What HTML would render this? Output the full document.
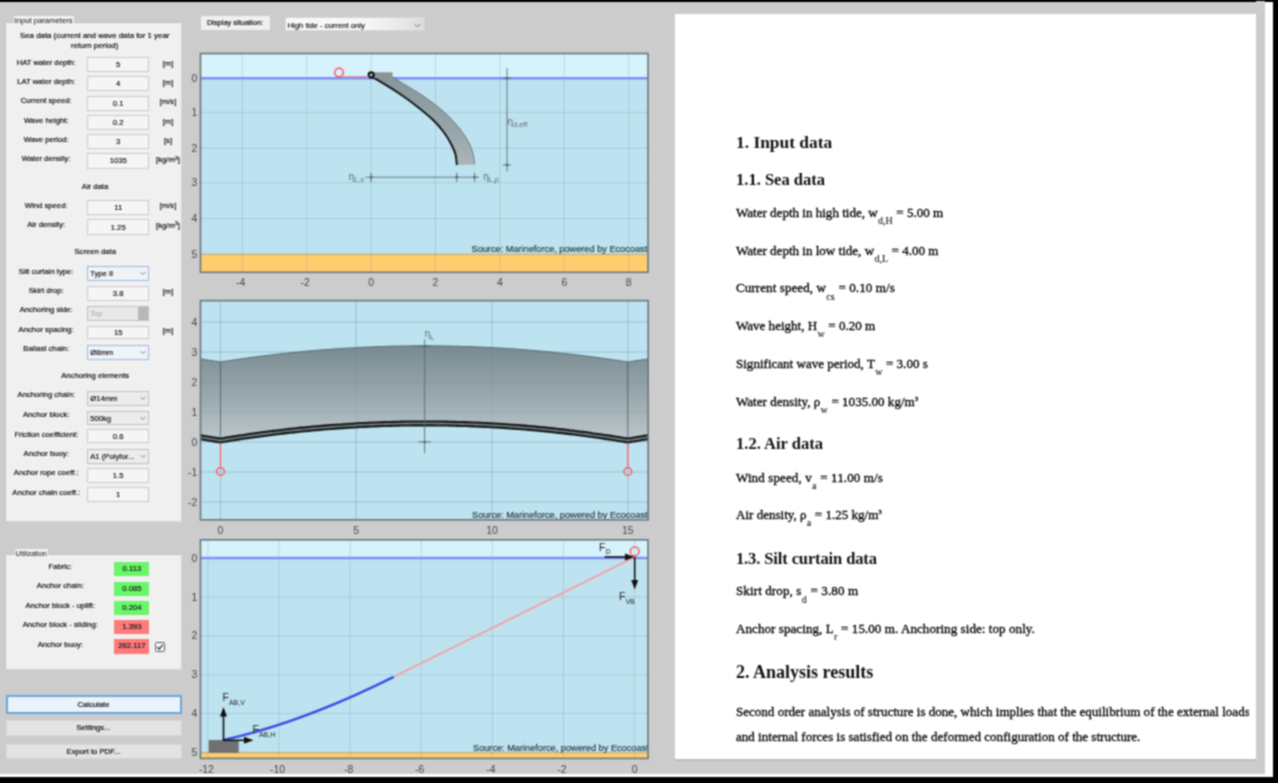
<!DOCTYPE html><html><head><meta charset="utf-8"><title>Silt curtain</title><style>
*{box-sizing:border-box;margin:0;padding:0}
html,body{width:1278px;height:783px;overflow:hidden}
body{background:#000;font-family:"Liberation Sans",sans-serif;font-size:7.7px;color:#222;position:relative}
#root{position:absolute;left:-12px;top:-12px;width:1302px;height:807px;background:#000;overflow:hidden;filter:url(#soft)}
#stage{position:absolute;left:12px;top:12px;width:1278px;height:783px}
#app{position:absolute;left:0;top:2px;width:1265px;height:772px;background:#cccccc}
.wstrip{position:absolute;background:#fff}
.abs{position:absolute}
.panel{position:absolute;background:#f0f0f0;box-shadow:-1px -1px 0 0 #c1c1c1, 1px 1px 0 0 #d6d6d6}
.ptitle{position:absolute;background:#f0f0f0;padding:0 1px;line-height:9px;height:9px;white-space:nowrap;color:#111}
.lbl{position:absolute;text-align:center;white-space:nowrap;line-height:10px;height:10px;color:#000;-webkit-text-stroke:0.15px #000}
.inp{position:absolute;background:#f5f5f5;border:1px solid #cacaca;text-align:center;line-height:13px;color:#000;-webkit-text-stroke:0.12px #000;white-space:nowrap;overflow:hidden}
.sel{position:absolute;background:#ececec;border:1px solid #c0c0c0;text-align:left;padding-left:2px;line-height:13px;color:#000;-webkit-text-stroke:0.12px #000;white-space:nowrap;overflow:hidden}
.sel.foc{border-color:#9db9dc;background:#eef3f8}
.sel svg{position:absolute;right:2px;top:4px}
.util{position:absolute;text-align:center;line-height:14px;color:#111;-webkit-text-stroke:0.15px #111}
.btn{position:absolute;background:#e3e3e3;border:1px solid #d6d6d6;text-align:center;color:#000;white-space:nowrap;-webkit-text-stroke:0.15px #000}
#doc{position:absolute;left:674.6px;top:14px;width:581.4px;height:746.5px;background:#fff;font-family:"Liberation Serif",serif;color:#111;border-bottom:2px solid #bdbdbd;overflow:hidden}
#docclip{position:absolute;left:0;top:0;width:574.3px;height:100%;overflow:hidden}
#doc .h1{position:absolute;left:61.4px;font-weight:bold;font-size:17.7px;line-height:20px;white-space:nowrap}
#doc .h2{position:absolute;left:61.4px;font-weight:bold;font-size:16.55px;line-height:20px;white-space:nowrap}
#doc .p{position:absolute;left:61.4px;font-size:13.05px;line-height:16px;white-space:nowrap;color:#000;-webkit-text-stroke:0.3px #000}
#doc sub{font-size:10px;vertical-align:baseline;position:relative;top:7.4px;margin:0 0.3px;-webkit-text-stroke:0.1px #111;color:#111}
#doc sup{font-size:7px;vertical-align:baseline;position:relative;top:-5px}
</style></head><body>
<svg width="0" height="0" style="position:absolute"><defs><filter id="soft" x="0" y="0" width="100%" height="100%" color-interpolation-filters="sRGB"><feConvolveMatrix order="3" kernelMatrix="1 2.0 1 2.0 4.0 2.0 1 2.0 1" edgeMode="duplicate" preserveAlpha="true"/></filter></defs></svg>
<div id="root"><div class="abs" style="left:0;top:14px;width:20px;height:772px;background:#ccc"></div><div class="abs" style="left:0;top:786px;width:20px;height:3px;background:#fff"></div><div id="stage">
<div class="wstrip" style="left:1264.5px;top:2px;width:8.5px;height:775px"></div>
<div class="wstrip" style="left:0;top:774px;width:1273px;height:3px"></div>
<div class="abs" style="left:1256px;top:1px;width:8.7px;height:2px;background:#ccc"></div>
<div id="app">
<div class="panel" style="left:5.9px;top:21px;width:174.8px;height:497.7px"></div>
<div class="ptitle" style="left:13.5px;top:13.5px;">Input parameters</div>
<div class="lbl" style="left:9.700000000000003px;top:28.700000000000003px;width:170px;font-size:7.86px">Sea data (current and wave data for 1 year</div>
<div class="lbl" style="left:9.700000000000003px;top:38.7px;width:170px;font-size:7.86px">return period)</div>
<div class="lbl" style="left:1.2000000000000028px;top:55.8px;width:90px;">HAT water depth:</div>
<div class="inp" style="left:87.2px;top:54.5px;width:61.999999999999986px;height:15.0px;line-height:14.0px">5</div>
<div class="lbl" style="left:153.0px;top:56.599999999999994px;width:30px;">[m]</div>
<div class="lbl" style="left:1.2000000000000028px;top:75.3px;width:90px;">LAT water depth:</div>
<div class="inp" style="left:87.2px;top:74px;width:61.999999999999986px;height:15.200000000000003px;line-height:14.200000000000003px">4</div>
<div class="lbl" style="left:153.0px;top:76.1px;width:30px;">[m]</div>
<div class="lbl" style="left:1.2000000000000028px;top:94.3px;width:90px;">Current speed:</div>
<div class="inp" style="left:87.2px;top:93.5px;width:61.999999999999986px;height:15.0px;line-height:14.0px">0.1</div>
<div class="lbl" style="left:153.0px;top:95.1px;width:30px;">[m/s]</div>
<div class="lbl" style="left:1.2000000000000028px;top:113.7px;width:90px;">Wave height:</div>
<div class="inp" style="left:87.2px;top:113px;width:61.999999999999986px;height:15px;line-height:14px">0.2</div>
<div class="lbl" style="left:153.0px;top:114.5px;width:30px;">[m]</div>
<div class="lbl" style="left:1.2000000000000028px;top:133px;width:90px;">Wave period:</div>
<div class="inp" style="left:87.2px;top:132.4px;width:61.999999999999986px;height:14.400000000000006px;line-height:13.400000000000006px">3</div>
<div class="lbl" style="left:153.0px;top:133.8px;width:30px;">[s]</div>
<div class="lbl" style="left:1.2000000000000028px;top:152.2px;width:90px;">Water density:</div>
<div class="inp" style="left:87.2px;top:151.3px;width:61.999999999999986px;height:15.699999999999989px;line-height:14.699999999999989px">1035</div>
<div class="lbl" style="left:153.0px;top:153.0px;width:30px;">[kg/m<span style="font-size:5.5px;position:relative;top:-2.5px">3</span>]</div>
<div class="lbl" style="left:50.0px;top:179.5px;width:90px;">Air data</div>
<div class="lbl" style="left:1.2000000000000028px;top:198.6px;width:90px;">Wind speed:</div>
<div class="inp" style="left:87.2px;top:197.8px;width:61.999999999999986px;height:14.899999999999977px;line-height:13.899999999999977px">11</div>
<div class="lbl" style="left:153.0px;top:199.4px;width:30px;">[m/s]</div>
<div class="lbl" style="left:1.2000000000000028px;top:218px;width:90px;">Air density:</div>
<div class="inp" style="left:87.2px;top:216.9px;width:61.999999999999986px;height:16.099999999999994px;line-height:15.099999999999994px">1.25</div>
<div class="lbl" style="left:153.0px;top:218.8px;width:30px;">[kg/m<span style="font-size:5.5px;position:relative;top:-2.5px">3</span>]</div>
<div class="lbl" style="left:50.2px;top:245px;width:90px;">Screen data</div>
<div class="lbl" style="left:1.2000000000000028px;top:264.6px;width:90px;">Silt curtain type:</div>
<div class="sel foc" style="left:87.2px;top:263.8px;width:61.999999999999986px;height:15.399999999999977px;line-height:14.399999999999977px">Type II<svg width="6" height="5" viewBox="0 0 6 5"><path d="M0.5 1 L3 3.5 L5.5 1" fill="none" stroke="#7d8790" stroke-width="1"/></svg></div>
<div class="lbl" style="left:1.2000000000000028px;top:283.7px;width:90px;">Skirt drop:</div>
<div class="inp" style="left:87.2px;top:283.7px;width:61.999999999999986px;height:15.0px;line-height:14.0px">3.8</div>
<div class="lbl" style="left:153.0px;top:284.5px;width:30px;">[m]</div>
<div class="lbl" style="left:1.2000000000000028px;top:303px;width:90px;">Anchoring side:</div>
<div class="sel" style="left:87.2px;top:303.7px;width:61.999999999999986px;height:14.900000000000034px;line-height:13.900000000000034px;color:#a6a6a6;-webkit-text-stroke:0;background:#e9e9e9">Top<div class="abs" style="right:0;top:0;width:10.5px;height:100%;background:#b8b8b8"></div></div>
<div class="lbl" style="left:1.2000000000000028px;top:322.7px;width:90px;">Anchor spacing:</div>
<div class="inp" style="left:87.2px;top:323.6px;width:61.999999999999986px;height:13.599999999999966px;line-height:12.599999999999966px">15</div>
<div class="lbl" style="left:153.0px;top:323.5px;width:30px;">[m]</div>
<div class="lbl" style="left:1.2000000000000028px;top:342.2px;width:90px;">Ballast chain:</div>
<div class="sel foc" style="left:87.2px;top:342.7px;width:61.999999999999986px;height:14.900000000000034px;line-height:13.900000000000034px">&Oslash;8mm<svg width="6" height="5" viewBox="0 0 6 5"><path d="M0.5 1 L3 3.5 L5.5 1" fill="none" stroke="#7d8790" stroke-width="1"/></svg></div>
<div class="lbl" style="left:50.2px;top:369px;width:90px;">Anchoring elements</div>
<div class="lbl" style="left:1.2000000000000028px;top:388.3px;width:90px;">Anchoring chain:</div>
<div class="sel" style="left:87.2px;top:388.5px;width:61.999999999999986px;height:15.399999999999977px;line-height:14.399999999999977px">&Oslash;14mm<svg width="6" height="5" viewBox="0 0 6 5"><path d="M0.5 1 L3 3.5 L5.5 1" fill="none" stroke="#7d8790" stroke-width="1"/></svg></div>
<div class="lbl" style="left:1.2000000000000028px;top:408px;width:90px;">Anchor block:</div>
<div class="sel" style="left:87.2px;top:408.6px;width:61.999999999999986px;height:14.399999999999977px;line-height:13.399999999999977px">500kg<svg width="6" height="5" viewBox="0 0 6 5"><path d="M0.5 1 L3 3.5 L5.5 1" fill="none" stroke="#7d8790" stroke-width="1"/></svg></div>
<div class="lbl" style="left:1.3999999999999986px;top:427.6px;width:90px;">Friction coefficient:</div>
<div class="inp" style="left:87.2px;top:426.8px;width:61.999999999999986px;height:14.599999999999966px;line-height:13.599999999999966px">0.6</div>
<div class="lbl" style="left:1.2000000000000028px;top:446.7px;width:90px;">Anchor buoy:</div>
<div class="sel" style="left:87.2px;top:446.5px;width:61.999999999999986px;height:15.5px;line-height:14.5px">A1 (Polyfor...<svg width="6" height="5" viewBox="0 0 6 5"><path d="M0.5 1 L3 3.5 L5.5 1" fill="none" stroke="#7d8790" stroke-width="1"/></svg></div>
<div class="lbl" style="left:1.2000000000000028px;top:466.3px;width:90px;">Anchor rope coeff.:</div>
<div class="inp" style="left:87.2px;top:466px;width:61.999999999999986px;height:14.5px;line-height:13.5px">1.5</div>
<div class="lbl" style="left:1.2000000000000028px;top:485.6px;width:90px;">Anchor chain coeff.:</div>
<div class="inp" style="left:87.2px;top:485.3px;width:61.999999999999986px;height:15.099999999999966px;line-height:14.099999999999966px">1</div>
<div class="panel" style="left:5.9px;top:552.8px;width:174.8px;height:114.2px"></div>
<div class="ptitle" style="left:14.5px;top:546.5px;font-size:7.2px">Utilization</div>
<div class="lbl" style="left:10.299999999999997px;top:559.6px;width:100px;">Fabric:</div>
<div class="util" style="left:114.4px;top:559.8px;width:35px;height:14.400000000000091px;line-height:14.400000000000091px;background:#69f769">0.113</div>
<div class="lbl" style="left:10.299999999999997px;top:579.3px;width:100px;">Anchor chain:</div>
<div class="util" style="left:114.4px;top:579.5px;width:35px;height:14.5px;line-height:14.5px;background:#69f769">0.085</div>
<div class="lbl" style="left:10.299999999999997px;top:598.9px;width:100px;">Anchor block - uplift:</div>
<div class="util" style="left:114.4px;top:599px;width:35px;height:14px;line-height:14px;background:#69f769">0.204</div>
<div class="lbl" style="left:10.299999999999997px;top:618px;width:100px;">Anchor block - sliding:</div>
<div class="util" style="left:114.4px;top:618.2px;width:35px;height:14.0px;line-height:14.0px;background:#ff7a7a">1.393</div>
<div class="lbl" style="left:10.299999999999997px;top:638px;width:100px;">Anchor buoy:</div>
<div class="util" style="left:114.4px;top:637.4px;width:35px;height:14.399999999999977px;line-height:14.399999999999977px;background:#ff7a7a">262.117</div>
<div class="abs" style="left:154.6px;top:640.3px;width:10px;height:10px;border:1px solid #5a5a5a;border-radius:1.5px;background:#f6f6f6"><svg width="8" height="8" viewBox="0 0 8 8" style="position:absolute;left:0;top:0"><path d="M1.3 4 L3.2 6.2 L6.8 1.6" fill="none" stroke="#333" stroke-width="1.2"/></svg></div>
<div class="btn" style="left:5.5px;top:692.7px;width:176px;height:19.3px;line-height:15.5px;background:#e8f3fc;border:2px solid #6ba5dc">Calculate</div>
<div class="btn" style="left:5.5px;top:717.5px;width:176px;height:16px;line-height:14px">Settings...</div>
<div class="btn" style="left:5.5px;top:741.5px;width:176px;height:15px;line-height:13px">Export to PDF...</div>
<div class="abs" style="left:200.5px;top:14.2px;width:69px;height:14.3px;background:#f0f0f0;text-align:center;line-height:14px;color:#222;white-space:nowrap;font-size:7.45px;-webkit-text-stroke:0.15px #000;color:#000">Display situation:</div>
<div class="sel" style="left:284.5px;top:14.8px;width:140.5px;height:14.4px;line-height:15.5px;background:linear-gradient(90deg,#f8f8f8 0%,#f6f6f6 60%,#dddddd 100%);border-color:#d6d6d6">High tide - current only<svg width="7" height="5" viewBox="0 0 7 5" style="right:3px;top:5px"><path d="M0.5 0.8 L3.5 3.8 L6.5 0.8" fill="none" stroke="#777" stroke-width="1"/></svg></div>
<svg class="abs" style="left:0;top:0" width="1265" height="772" viewBox="0 2 1265 772" font-family="Liberation Sans, sans-serif">
<defs><linearGradient id="gcur2" x1="0" y1="0" x2="0" y2="1"><stop offset="0" stop-color="#798b92"/><stop offset="0.5" stop-color="#97a6ac"/><stop offset="1" stop-color="#bcc7ca"/></linearGradient><linearGradient id="gcur1" x1="0" y1="0" x2="0" y2="1"><stop offset="0" stop-color="#87969b"/><stop offset="0.6" stop-color="#97a5aa"/><stop offset="1" stop-color="#a9b5b9"/></linearGradient><clipPath id="c1"><rect x="200.5" y="53.5" width="447.5" height="218.8"/></clipPath><clipPath id="c2"><rect x="200.5" y="300.6" width="447.7" height="219.2"/></clipPath><clipPath id="c3"><rect x="200.5" y="539.8" width="447.5" height="218.6"/></clipPath></defs>
<rect x="200.5" y="53.5" width="447.5" height="24.700000000000003" fill="#d6f2fc"/>
<rect x="200.5" y="78.2" width="447.5" height="175.89999999999998" fill="#bee3f0"/>
<rect x="200.5" y="254.1" width="447.5" height="18.200000000000017" fill="#ffcd6e"/>
<line x1="200.5" x2="648.0" y1="254.4" y2="254.4" stroke="#dcae6a" stroke-width="1"/>
<line x1="242.3" x2="242.3" y1="53.5" y2="272.3" stroke="#5f8496" stroke-opacity="0.24" stroke-width="1"/>
<line x1="306.7" x2="306.7" y1="53.5" y2="272.3" stroke="#5f8496" stroke-opacity="0.24" stroke-width="1"/>
<line x1="371.1" x2="371.1" y1="53.5" y2="272.3" stroke="#5f8496" stroke-opacity="0.24" stroke-width="1"/>
<line x1="435.5" x2="435.5" y1="53.5" y2="272.3" stroke="#5f8496" stroke-opacity="0.24" stroke-width="1"/>
<line x1="499.9" x2="499.9" y1="53.5" y2="272.3" stroke="#5f8496" stroke-opacity="0.24" stroke-width="1"/>
<line x1="564.3" x2="564.3" y1="53.5" y2="272.3" stroke="#5f8496" stroke-opacity="0.24" stroke-width="1"/>
<line x1="628.7" x2="628.7" y1="53.5" y2="272.3" stroke="#5f8496" stroke-opacity="0.24" stroke-width="1"/>
<line x1="200.5" x2="648.0" y1="112.6" y2="112.6" stroke="#5f8496" stroke-opacity="0.24" stroke-width="1"/>
<line x1="200.5" x2="648.0" y1="148.3" y2="148.3" stroke="#5f8496" stroke-opacity="0.24" stroke-width="1"/>
<line x1="200.5" x2="648.0" y1="182.7" y2="182.7" stroke="#5f8496" stroke-opacity="0.24" stroke-width="1"/>
<line x1="200.5" x2="648.0" y1="218.5" y2="218.5" stroke="#5f8496" stroke-opacity="0.24" stroke-width="1"/>
<line x1="200.5" x2="648.0" y1="254.1" y2="254.1" stroke="#5f8496" stroke-opacity="0.24" stroke-width="1"/>
<line x1="200.5" x2="648.0" y1="78.2" y2="78.2" stroke="#7d90f6" stroke-width="2.4"/>
<path d="M371 76.2C374.1 78.0 383.9 83.8 389.4 87.2C394.9 90.6 399.1 93.3 404.0 96.7C408.9 100.1 413.8 103.8 418.7 107.7C423.6 111.6 429.2 116.2 433.4 120.2C437.6 124.2 440.8 128.1 443.7 132.0C446.6 135.9 449.1 140.0 451.0 143.7C452.9 147.4 454.4 150.4 455.4 154.0C456.4 157.6 456.6 163.2 456.9 165.0L474.5 164.6C474.3 162.8 474.1 157.7 473.1 154.0C472.1 150.3 470.9 146.4 468.7 142.2C466.5 138.0 463.3 133.4 459.9 129.0C456.5 124.6 452.5 120.1 448.1 115.8C443.7 111.5 438.3 107.1 433.4 103.3C428.5 99.5 423.6 96.2 418.7 93.0C413.8 89.8 408.4 86.9 404.0 84.2C399.6 81.5 394.2 78.1 392.3 76.9Z" fill="url(#gcur1)"/>
<path d="M371 76.2C374.1 78.0 383.9 83.8 389.4 87.2C394.9 90.6 399.1 93.3 404.0 96.7C408.9 100.1 413.8 103.8 418.7 107.7C423.6 111.6 429.2 116.2 433.4 120.2C437.6 124.2 440.8 128.1 443.7 132.0C446.6 135.9 449.1 140.0 451.0 143.7C452.9 147.4 454.4 150.4 455.4 154.0C456.4 157.6 456.6 163.2 456.9 165.0" fill="none" stroke="#15191a" stroke-width="2" stroke-linejoin="round"/>
<path d="M392.3 76.9C394.2 78.1 399.6 81.5 404.0 84.2C408.4 86.9 413.8 89.8 418.7 93.0C423.6 96.2 428.5 99.5 433.4 103.3C438.3 107.1 443.7 111.5 448.1 115.8C452.5 120.1 456.5 124.6 459.9 129.0C463.3 133.4 466.5 138.0 468.7 142.2C470.9 146.4 472.1 150.3 473.1 154.0C474.1 157.7 474.3 162.8 474.5 164.6" fill="none" stroke="#5d686b" stroke-width="0.8"/>
<rect x="371" y="72.3" width="21.5" height="5.6" fill="#8b9597"/>
<circle cx="371.2" cy="74.9" r="2.5" fill="#cfd8da" stroke="#0c0c0c" stroke-width="2.2"/>
<line x1="343.5" x2="369" y1="76.7" y2="76.7" stroke="#f08a8a" stroke-width="1.2"/>
<circle cx="339" cy="72.6" r="4.3" fill="none" stroke="#ff5656" stroke-width="1.5"/>
<line x1="507" x2="507" y1="68" y2="171.5" stroke="#566a72" stroke-width="0.9"/>
<line x1="503" x2="511" y1="78.3" y2="78.3" stroke="#566a72" stroke-width="0.9"/><circle cx="507" cy="78.3" r="1.4" fill="#566a72"/>
<line x1="503" x2="511" y1="165" y2="165" stroke="#566a72" stroke-width="0.9"/><circle cx="507" cy="165" r="1.4" fill="#566a72"/>
<line x1="365.5" x2="479" y1="177.2" y2="177.2" stroke="#566a72" stroke-width="0.9"/>
<line x1="371.1" x2="371.1" y1="172.5" y2="182" stroke="#566a72" stroke-width="0.9"/><circle cx="371.1" cy="177.2" r="1.4" fill="#566a72"/>
<line x1="456.8" x2="456.8" y1="172.5" y2="182" stroke="#566a72" stroke-width="0.9"/><circle cx="456.8" cy="177.2" r="1.4" fill="#566a72"/>
<line x1="474.6" x2="474.6" y1="172.5" y2="182" stroke="#566a72" stroke-width="0.9"/><circle cx="474.6" cy="177.2" r="1.4" fill="#566a72"/>
<text x="507.6" y="124.6" font-size="10" fill="#5c6d75">&#951;<tspan font-size="7.3" dy="2.6">d,eff</tspan></text>
<text x="348.8" y="179.6" font-size="10" fill="#5c6d75">&#951;<tspan font-size="7.3" dy="2.6">L,x</tspan></text>
<text x="483.2" y="179.6" font-size="10" fill="#5c6d75">&#951;<tspan font-size="7.3" dy="2.6">L,p</tspan></text>
<text x="647.2" y="252" font-size="9.2" fill="#26363d" stroke="#26363d" stroke-width="0.15" text-anchor="end">Source: Marineforce, powered by Ecocoast</text>
<rect x="200.5" y="53.5" width="447.5" height="218.8" fill="none" stroke="#66777c" stroke-width="1.6"/>
<text x="197.3" y="81.8" font-size="10.4" fill="#484848" text-anchor="end">0</text>
<text x="197.3" y="116.2" font-size="10.4" fill="#484848" text-anchor="end">1</text>
<text x="197.3" y="151.9" font-size="10.4" fill="#484848" text-anchor="end">2</text>
<text x="197.3" y="186.3" font-size="10.4" fill="#484848" text-anchor="end">3</text>
<text x="197.3" y="222.1" font-size="10.4" fill="#484848" text-anchor="end">4</text>
<text x="197.3" y="257.7" font-size="10.4" fill="#484848" text-anchor="end">5</text>
<text x="240.7" y="285.7" font-size="10.4" fill="#484848" text-anchor="middle">-4</text>
<text x="305.1" y="285.7" font-size="10.4" fill="#484848" text-anchor="middle">-2</text>
<text x="371.1" y="285.7" font-size="10.4" fill="#484848" text-anchor="middle">0</text>
<text x="435.5" y="285.7" font-size="10.4" fill="#484848" text-anchor="middle">2</text>
<text x="499.9" y="285.7" font-size="10.4" fill="#484848" text-anchor="middle">4</text>
<text x="564.3" y="285.7" font-size="10.4" fill="#484848" text-anchor="middle">6</text>
<text x="628.7" y="285.7" font-size="10.4" fill="#484848" text-anchor="middle">8</text>
<rect x="200.5" y="300.6" width="447.70000000000005" height="219.19999999999993" fill="#bee3f0"/>
<line x1="220.5" x2="220.5" y1="300.6" y2="519.8" stroke="#5f8496" stroke-opacity="0.24" stroke-width="1"/>
<line x1="356.2" x2="356.2" y1="300.6" y2="519.8" stroke="#5f8496" stroke-opacity="0.24" stroke-width="1"/>
<line x1="492.0" x2="492.0" y1="300.6" y2="519.8" stroke="#5f8496" stroke-opacity="0.24" stroke-width="1"/>
<line x1="627.8" x2="627.8" y1="300.6" y2="519.8" stroke="#5f8496" stroke-opacity="0.24" stroke-width="1"/>
<line x1="200.5" x2="648.2" y1="502.0" y2="502.0" stroke="#5f8496" stroke-opacity="0.24" stroke-width="1"/>
<line x1="200.5" x2="648.2" y1="472.0" y2="472.0" stroke="#5f8496" stroke-opacity="0.24" stroke-width="1"/>
<line x1="200.5" x2="648.2" y1="442.0" y2="442.0" stroke="#5f8496" stroke-opacity="0.24" stroke-width="1"/>
<line x1="200.5" x2="648.2" y1="412.0" y2="412.0" stroke="#5f8496" stroke-opacity="0.24" stroke-width="1"/>
<line x1="200.5" x2="648.2" y1="382.0" y2="382.0" stroke="#5f8496" stroke-opacity="0.24" stroke-width="1"/>
<line x1="200.5" x2="648.2" y1="352.0" y2="352.0" stroke="#5f8496" stroke-opacity="0.24" stroke-width="1"/>
<line x1="200.5" x2="648.2" y1="322.0" y2="322.0" stroke="#5f8496" stroke-opacity="0.24" stroke-width="1"/>
<g clip-path="url(#c2)">
<polygon points="200.5,359.0 204.2,359.5 208.0,360.1 211.7,360.6 215.4,361.2 219.2,361.8 220.5,362.0 222.9,361.6 226.6,361.0 230.3,360.5 234.1,359.9 237.8,359.4 241.5,358.8 245.3,358.3 249.0,357.8 252.7,357.3 256.5,356.8 260.2,356.3 263.9,355.8 267.7,355.4 271.4,354.9 275.1,354.5 278.8,354.0 282.6,353.6 286.3,353.2 290.0,352.8 293.8,352.4 297.5,352.1 301.2,351.7 305.0,351.3 308.7,351.0 312.4,350.7 316.2,350.4 319.9,350.0 323.6,349.7 327.3,349.5 331.1,349.2 334.8,348.9 338.5,348.7 342.3,348.4 346.0,348.2 349.7,348.0 353.5,347.8 357.2,347.6 360.9,347.4 364.7,347.2 368.4,347.0 372.1,346.9 375.8,346.7 379.6,346.6 383.3,346.5 387.0,346.3 390.8,346.2 394.5,346.1 398.2,346.1 402.0,346.0 405.7,345.9 409.4,345.9 413.2,345.8 416.9,345.8 420.6,345.8 424.4,345.8 428.1,345.8 431.8,345.8 435.5,345.9 439.3,345.9 443.0,345.9 446.7,346.0 450.5,346.1 454.2,346.2 457.9,346.2 461.7,346.4 465.4,346.5 469.1,346.6 472.9,346.7 476.6,346.9 480.3,347.0 484.0,347.2 487.8,347.4 491.5,347.6 495.2,347.8 499.0,348.0 502.7,348.2 506.4,348.4 510.2,348.7 513.9,348.9 517.6,349.2 521.4,349.5 525.1,349.8 528.8,350.1 532.5,350.4 536.3,350.7 540.0,351.0 543.7,351.4 547.5,351.7 551.2,352.1 554.9,352.5 558.7,352.9 562.4,353.3 566.1,353.7 569.9,354.1 573.6,354.5 577.3,355.0 581.0,355.4 584.8,355.9 588.5,356.4 592.2,356.8 596.0,357.3 599.7,357.8 603.4,358.4 607.2,358.9 610.9,359.4 614.6,360.0 618.4,360.5 622.1,361.1 625.8,361.7 627.8,362.0 629.5,361.7 633.3,361.1 637.0,360.6 640.7,360.0 644.5,359.4 648.2,358.9 648.2,437.2 644.5,437.8 640.7,438.4 637.0,439.0 633.3,439.6 629.5,440.2 627.8,440.5 625.8,440.2 622.1,439.6 618.4,439.0 614.6,438.4 610.9,437.8 607.2,437.2 603.4,436.7 599.7,436.1 596.0,435.6 592.2,435.1 588.5,434.5 584.8,434.0 581.0,433.6 577.3,433.1 573.6,432.6 569.9,432.2 566.1,431.7 562.4,431.3 558.7,430.9 554.9,430.5 551.2,430.1 547.5,429.7 543.7,429.3 540.0,428.9 536.3,428.6 532.5,428.2 528.8,427.9 525.1,427.6 521.4,427.3 517.6,427.0 513.9,426.7 510.2,426.5 506.4,426.2 502.7,425.9 499.0,425.7 495.2,425.5 491.5,425.3 487.8,425.1 484.0,424.9 480.3,424.7 476.6,424.5 472.9,424.4 469.1,424.2 465.4,424.1 461.7,424.0 457.9,423.9 454.2,423.8 450.5,423.7 446.7,423.6 443.0,423.5 439.3,423.5 435.5,423.5 431.8,423.4 428.1,423.4 424.4,423.4 420.6,423.4 416.9,423.4 413.2,423.4 409.4,423.5 405.7,423.5 402.0,423.6 398.2,423.7 394.5,423.8 390.8,423.9 387.0,424.0 383.3,424.1 379.6,424.2 375.8,424.4 372.1,424.5 368.4,424.7 364.7,424.9 360.9,425.0 357.2,425.2 353.5,425.5 349.7,425.7 346.0,425.9 342.3,426.2 338.5,426.4 334.8,426.7 331.1,427.0 327.3,427.3 323.6,427.6 319.9,427.9 316.2,428.2 312.4,428.5 308.7,428.9 305.0,429.3 301.2,429.6 297.5,430.0 293.8,430.4 290.0,430.8 286.3,431.2 282.6,431.7 278.8,432.1 275.1,432.6 271.4,433.0 267.7,433.5 263.9,434.0 260.2,434.5 256.5,435.0 252.7,435.5 249.0,436.0 245.3,436.6 241.5,437.1 237.8,437.7 234.1,438.3 230.3,438.9 226.6,439.5 222.9,440.1 220.5,440.5 219.2,440.3 215.4,439.7 211.7,439.1 208.0,438.5 204.2,437.9 200.5,437.3" fill="url(#gcur2)"/>
<polyline points="200.5,359.0 204.2,359.5 208.0,360.1 211.7,360.6 215.4,361.2 219.2,361.8 220.5,362.0 222.9,361.6 226.6,361.0 230.3,360.5 234.1,359.9 237.8,359.4 241.5,358.8 245.3,358.3 249.0,357.8 252.7,357.3 256.5,356.8 260.2,356.3 263.9,355.8 267.7,355.4 271.4,354.9 275.1,354.5 278.8,354.0 282.6,353.6 286.3,353.2 290.0,352.8 293.8,352.4 297.5,352.1 301.2,351.7 305.0,351.3 308.7,351.0 312.4,350.7 316.2,350.4 319.9,350.0 323.6,349.7 327.3,349.5 331.1,349.2 334.8,348.9 338.5,348.7 342.3,348.4 346.0,348.2 349.7,348.0 353.5,347.8 357.2,347.6 360.9,347.4 364.7,347.2 368.4,347.0 372.1,346.9 375.8,346.7 379.6,346.6 383.3,346.5 387.0,346.3 390.8,346.2 394.5,346.1 398.2,346.1 402.0,346.0 405.7,345.9 409.4,345.9 413.2,345.8 416.9,345.8 420.6,345.8 424.4,345.8 428.1,345.8 431.8,345.8 435.5,345.9 439.3,345.9 443.0,345.9 446.7,346.0 450.5,346.1 454.2,346.2 457.9,346.2 461.7,346.4 465.4,346.5 469.1,346.6 472.9,346.7 476.6,346.9 480.3,347.0 484.0,347.2 487.8,347.4 491.5,347.6 495.2,347.8 499.0,348.0 502.7,348.2 506.4,348.4 510.2,348.7 513.9,348.9 517.6,349.2 521.4,349.5 525.1,349.8 528.8,350.1 532.5,350.4 536.3,350.7 540.0,351.0 543.7,351.4 547.5,351.7 551.2,352.1 554.9,352.5 558.7,352.9 562.4,353.3 566.1,353.7 569.9,354.1 573.6,354.5 577.3,355.0 581.0,355.4 584.8,355.9 588.5,356.4 592.2,356.8 596.0,357.3 599.7,357.8 603.4,358.4 607.2,358.9 610.9,359.4 614.6,360.0 618.4,360.5 622.1,361.1 625.8,361.7 627.8,362.0 629.5,361.7 633.3,361.1 637.0,360.6 640.7,360.0 644.5,359.4 648.2,358.9" fill="none" stroke="#5b6c73" stroke-width="1"/>
<polyline points="200.5,437.3 204.2,437.9 208.0,438.5 211.7,439.1 215.4,439.7 219.2,440.3 220.5,440.5 222.9,440.1 226.6,439.5 230.3,438.9 234.1,438.3 237.8,437.7 241.5,437.1 245.3,436.6 249.0,436.0 252.7,435.5 256.5,435.0 260.2,434.5 263.9,434.0 267.7,433.5 271.4,433.0 275.1,432.6 278.8,432.1 282.6,431.7 286.3,431.2 290.0,430.8 293.8,430.4 297.5,430.0 301.2,429.6 305.0,429.3 308.7,428.9 312.4,428.5 316.2,428.2 319.9,427.9 323.6,427.6 327.3,427.3 331.1,427.0 334.8,426.7 338.5,426.4 342.3,426.2 346.0,425.9 349.7,425.7 353.5,425.5 357.2,425.2 360.9,425.0 364.7,424.9 368.4,424.7 372.1,424.5 375.8,424.4 379.6,424.2 383.3,424.1 387.0,424.0 390.8,423.9 394.5,423.8 398.2,423.7 402.0,423.6 405.7,423.5 409.4,423.5 413.2,423.4 416.9,423.4 420.6,423.4 424.4,423.4 428.1,423.4 431.8,423.4 435.5,423.5 439.3,423.5 443.0,423.5 446.7,423.6 450.5,423.7 454.2,423.8 457.9,423.9 461.7,424.0 465.4,424.1 469.1,424.2 472.9,424.4 476.6,424.5 480.3,424.7 484.0,424.9 487.8,425.1 491.5,425.3 495.2,425.5 499.0,425.7 502.7,425.9 506.4,426.2 510.2,426.5 513.9,426.7 517.6,427.0 521.4,427.3 525.1,427.6 528.8,427.9 532.5,428.2 536.3,428.6 540.0,428.9 543.7,429.3 547.5,429.7 551.2,430.1 554.9,430.5 558.7,430.9 562.4,431.3 566.1,431.7 569.9,432.2 573.6,432.6 577.3,433.1 581.0,433.6 584.8,434.0 588.5,434.5 592.2,435.1 596.0,435.6 599.7,436.1 603.4,436.7 607.2,437.2 610.9,437.8 614.6,438.4 618.4,439.0 622.1,439.6 625.8,440.2 627.8,440.5 629.5,440.2 633.3,439.6 637.0,439.0 640.7,438.4 644.5,437.8 648.2,437.2" fill="none" stroke="#171b1c" stroke-width="6" stroke-linejoin="round"/>
<polyline points="200.5,437.3 204.2,437.9 208.0,438.5 211.7,439.1 215.4,439.7 219.2,440.3 220.5,440.5 222.9,440.1 226.6,439.5 230.3,438.9 234.1,438.3 237.8,437.7 241.5,437.1 245.3,436.6 249.0,436.0 252.7,435.5 256.5,435.0 260.2,434.5 263.9,434.0 267.7,433.5 271.4,433.0 275.1,432.6 278.8,432.1 282.6,431.7 286.3,431.2 290.0,430.8 293.8,430.4 297.5,430.0 301.2,429.6 305.0,429.3 308.7,428.9 312.4,428.5 316.2,428.2 319.9,427.9 323.6,427.6 327.3,427.3 331.1,427.0 334.8,426.7 338.5,426.4 342.3,426.2 346.0,425.9 349.7,425.7 353.5,425.5 357.2,425.2 360.9,425.0 364.7,424.9 368.4,424.7 372.1,424.5 375.8,424.4 379.6,424.2 383.3,424.1 387.0,424.0 390.8,423.9 394.5,423.8 398.2,423.7 402.0,423.6 405.7,423.5 409.4,423.5 413.2,423.4 416.9,423.4 420.6,423.4 424.4,423.4 428.1,423.4 431.8,423.4 435.5,423.5 439.3,423.5 443.0,423.5 446.7,423.6 450.5,423.7 454.2,423.8 457.9,423.9 461.7,424.0 465.4,424.1 469.1,424.2 472.9,424.4 476.6,424.5 480.3,424.7 484.0,424.9 487.8,425.1 491.5,425.3 495.2,425.5 499.0,425.7 502.7,425.9 506.4,426.2 510.2,426.5 513.9,426.7 517.6,427.0 521.4,427.3 525.1,427.6 528.8,427.9 532.5,428.2 536.3,428.6 540.0,428.9 543.7,429.3 547.5,429.7 551.2,430.1 554.9,430.5 558.7,430.9 562.4,431.3 566.1,431.7 569.9,432.2 573.6,432.6 577.3,433.1 581.0,433.6 584.8,434.0 588.5,434.5 592.2,435.1 596.0,435.6 599.7,436.1 603.4,436.7 607.2,437.2 610.9,437.8 614.6,438.4 618.4,439.0 622.1,439.6 625.8,440.2 627.8,440.5 629.5,440.2 633.3,439.6 637.0,439.0 640.7,438.4 644.5,437.8 648.2,437.2" fill="none" stroke="#8e999b" stroke-width="1.3" stroke-linejoin="round"/>
</g>
<line x1="220.5" x2="220.5" y1="300.6" y2="519.8" stroke="#4f6f80" stroke-opacity="0.13" stroke-width="1"/>
<line x1="356.2" x2="356.2" y1="300.6" y2="519.8" stroke="#4f6f80" stroke-opacity="0.13" stroke-width="1"/>
<line x1="492.0" x2="492.0" y1="300.6" y2="519.8" stroke="#4f6f80" stroke-opacity="0.13" stroke-width="1"/>
<line x1="627.8" x2="627.8" y1="300.6" y2="519.8" stroke="#4f6f80" stroke-opacity="0.13" stroke-width="1"/>
<line x1="200.5" x2="648.2" y1="502.0" y2="502.0" stroke="#4f6f80" stroke-opacity="0.13" stroke-width="1"/>
<line x1="200.5" x2="648.2" y1="472.0" y2="472.0" stroke="#4f6f80" stroke-opacity="0.13" stroke-width="1"/>
<line x1="200.5" x2="648.2" y1="442.0" y2="442.0" stroke="#4f6f80" stroke-opacity="0.13" stroke-width="1"/>
<line x1="200.5" x2="648.2" y1="412.0" y2="412.0" stroke="#4f6f80" stroke-opacity="0.13" stroke-width="1"/>
<line x1="200.5" x2="648.2" y1="382.0" y2="382.0" stroke="#4f6f80" stroke-opacity="0.13" stroke-width="1"/>
<line x1="200.5" x2="648.2" y1="352.0" y2="352.0" stroke="#4f6f80" stroke-opacity="0.13" stroke-width="1"/>
<line x1="200.5" x2="648.2" y1="322.0" y2="322.0" stroke="#4f6f80" stroke-opacity="0.13" stroke-width="1"/>
<line x1="220.5" x2="220.5" y1="362" y2="438" stroke="#3a4446" stroke-opacity="0.6" stroke-width="1"/>
<line x1="220.5" x2="220.5" y1="443.5" y2="467.5" stroke="#ff6a78" stroke-width="1.5"/>
<circle cx="220.5" cy="471.6" r="3.9" fill="none" stroke="#ff5a66" stroke-width="1.4"/>
<line x1="627.8" x2="627.8" y1="362" y2="438" stroke="#3a4446" stroke-opacity="0.6" stroke-width="1"/>
<line x1="627.8" x2="627.8" y1="443.5" y2="467.5" stroke="#ff6a78" stroke-width="1.5"/>
<circle cx="627.8" cy="471.6" r="3.9" fill="none" stroke="#ff5a66" stroke-width="1.4"/>
<line x1="424.6" x2="424.6" y1="339.5" y2="453" stroke="#566a72" stroke-width="0.9"/>
<line x1="418.5" x2="431" y1="346.4" y2="346.4" stroke="#566a72" stroke-width="0.9"/><circle cx="424.6" cy="346.4" r="1.4" fill="#566a72"/>
<line x1="418.5" x2="431" y1="442" y2="442" stroke="#566a72" stroke-width="0.9"/><circle cx="424.6" cy="442" r="1.4" fill="#566a72"/>
<text x="424.8" y="337" font-size="10" fill="#5c6d75">&#951;<tspan font-size="7.3" dy="2.6">L</tspan></text>
<g clip-path="url(#c2)"><text x="472" y="518.4" font-size="9.2" fill="#26363d" stroke="#26363d" stroke-width="0.15">Source: Marineforce, powered by Ecocoast</text></g>
<rect x="200.5" y="300.6" width="447.70000000000005" height="219.19999999999993" fill="none" stroke="#66777c" stroke-width="1.6"/>
<text x="197.3" y="505.6" font-size="10.4" fill="#484848" text-anchor="end">-2</text>
<text x="197.3" y="475.6" font-size="10.4" fill="#484848" text-anchor="end">-1</text>
<text x="197.3" y="445.6" font-size="10.4" fill="#484848" text-anchor="end">0</text>
<text x="197.3" y="415.6" font-size="10.4" fill="#484848" text-anchor="end">1</text>
<text x="197.3" y="385.6" font-size="10.4" fill="#484848" text-anchor="end">2</text>
<text x="197.3" y="355.6" font-size="10.4" fill="#484848" text-anchor="end">3</text>
<text x="197.3" y="325.6" font-size="10.4" fill="#484848" text-anchor="end">4</text>
<text x="220.5" y="533.9" font-size="10.4" fill="#484848" text-anchor="middle">0</text>
<text x="356.2" y="533.9" font-size="10.4" fill="#484848" text-anchor="middle">5</text>
<text x="492.0" y="533.9" font-size="10.4" fill="#484848" text-anchor="middle">10</text>
<text x="627.8" y="533.9" font-size="10.4" fill="#484848" text-anchor="middle">15</text>
<rect x="200.5" y="539.8" width="447.5" height="18.200000000000045" fill="#d6f2fc"/>
<rect x="200.5" y="558.0" width="447.5" height="194.5" fill="#bee3f0"/>
<rect x="200.5" y="752.5" width="447.5" height="5.899999999999977" fill="#ffcd6e"/>
<line x1="200.5" x2="648.0" y1="752.8" y2="752.8" stroke="#dcae6a" stroke-width="1"/>
<line x1="208.0" x2="208.0" y1="539.8" y2="758.4" stroke="#5f8496" stroke-opacity="0.24" stroke-width="1"/>
<line x1="279.1" x2="279.1" y1="539.8" y2="758.4" stroke="#5f8496" stroke-opacity="0.24" stroke-width="1"/>
<line x1="350.2" x2="350.2" y1="539.8" y2="758.4" stroke="#5f8496" stroke-opacity="0.24" stroke-width="1"/>
<line x1="421.3" x2="421.3" y1="539.8" y2="758.4" stroke="#5f8496" stroke-opacity="0.24" stroke-width="1"/>
<line x1="492.4" x2="492.4" y1="539.8" y2="758.4" stroke="#5f8496" stroke-opacity="0.24" stroke-width="1"/>
<line x1="563.5" x2="563.5" y1="539.8" y2="758.4" stroke="#5f8496" stroke-opacity="0.24" stroke-width="1"/>
<line x1="634.6" x2="634.6" y1="539.8" y2="758.4" stroke="#5f8496" stroke-opacity="0.24" stroke-width="1"/>
<line x1="200.5" x2="648.0" y1="596.9" y2="596.9" stroke="#5f8496" stroke-opacity="0.24" stroke-width="1"/>
<line x1="200.5" x2="648.0" y1="635.8" y2="635.8" stroke="#5f8496" stroke-opacity="0.24" stroke-width="1"/>
<line x1="200.5" x2="648.0" y1="674.7" y2="674.7" stroke="#5f8496" stroke-opacity="0.24" stroke-width="1"/>
<line x1="200.5" x2="648.0" y1="713.6" y2="713.6" stroke="#5f8496" stroke-opacity="0.24" stroke-width="1"/>
<line x1="200.5" x2="648.0" y1="752.5" y2="752.5" stroke="#5f8496" stroke-opacity="0.24" stroke-width="1"/>
<line x1="200.5" x2="648.0" y1="558.0" y2="558.0" stroke="#7d90f6" stroke-width="2.6"/>
<rect x="208.7" y="740" width="30" height="12.8" fill="#707070"/>
<line x1="392.7" y1="677.4" x2="634.4" y2="557.2" stroke="#f4a3aa" stroke-width="2"/>
<path d="M223.5 740 Q301.4 722.9 392.7 677.4" fill="none" stroke="#3b4ee2" stroke-width="2.6" stroke-linecap="round"/>
<line x1="223.5" y1="740.5" x2="223.5" y2="714" stroke="#111" stroke-width="1.6"/><polygon points="223.5,707 220,716.5 227,716.5" fill="#111"/>
<line x1="223" y1="740.3" x2="246" y2="740.3" stroke="#111" stroke-width="1.6"/><polygon points="253.5,740.3 244,736.8 244,743.8" fill="#111"/>
<text x="222.5" y="701" font-size="10.5" fill="#222">F<tspan font-size="7" dy="3.5">AB,V</tspan></text>
<text x="252.5" y="733" font-size="10.5" fill="#222">F<tspan font-size="7" dy="3.5">AB,H</tspan></text>
<circle cx="634.7" cy="551.4" r="4.4" fill="none" stroke="#ff5656" stroke-width="1.5"/>
<line x1="604.5" y1="557" x2="627" y2="557" stroke="#111" stroke-width="1.6"/><polygon points="634.5,557 625,553.5 625,560.5" fill="#111"/>
<line x1="634.7" y1="557" x2="634.7" y2="582" stroke="#111" stroke-width="1.6"/><polygon points="634.7,589.5 631.2,580 638.2,580" fill="#111"/>
<text x="599" y="551" font-size="10.5" fill="#222">F<tspan font-size="7" dy="3">D</tspan></text>
<text x="619" y="600" font-size="10.5" fill="#222">F<tspan font-size="7" dy="3.5">VB</tspan></text>
<g clip-path="url(#c3)"><text x="473" y="750.8" font-size="9.2" fill="#26363d" stroke="#26363d" stroke-width="0.15">Source: Marineforce, powered by Ecocoast</text></g>
<rect x="200.5" y="539.8" width="447.5" height="218.60000000000002" fill="none" stroke="#66777c" stroke-width="1.6"/>
<text x="197.3" y="561.6" font-size="10.4" fill="#484848" text-anchor="end">0</text>
<text x="197.3" y="600.5" font-size="10.4" fill="#484848" text-anchor="end">1</text>
<text x="197.3" y="639.4" font-size="10.4" fill="#484848" text-anchor="end">2</text>
<text x="197.3" y="678.3" font-size="10.4" fill="#484848" text-anchor="end">3</text>
<text x="197.3" y="717.2" font-size="10.4" fill="#484848" text-anchor="end">4</text>
<text x="197.3" y="756.1" font-size="10.4" fill="#484848" text-anchor="end">5</text>
<text x="206.4" y="773.3" font-size="10.4" fill="#484848" text-anchor="middle">-12</text>
<text x="277.5" y="773.3" font-size="10.4" fill="#484848" text-anchor="middle">-10</text>
<text x="348.6" y="773.3" font-size="10.4" fill="#484848" text-anchor="middle">-8</text>
<text x="419.7" y="773.3" font-size="10.4" fill="#484848" text-anchor="middle">-6</text>
<text x="490.8" y="773.3" font-size="10.4" fill="#484848" text-anchor="middle">-4</text>
<text x="561.9" y="773.3" font-size="10.4" fill="#484848" text-anchor="middle">-2</text>
<text x="634.6" y="773.3" font-size="10.4" fill="#484848" text-anchor="middle">0</text>
</svg>
</div>
<div id="doc"><div id="docclip">
<div class="h1" style="top:117.6px"><span style="font-size:17.4px">1. Input data</span></div>
<div class="h2" style="top:155.9px">1.1. Sea data</div>
<div class="p" style="top:190.7px">Water depth in high tide, w<sub>d,H</sub> = 5.00 m</div>
<div class="p" style="top:228.6px">Water depth in low tide, w<sub>d,L</sub> = 4.00 m</div>
<div class="p" style="top:266.2px;letter-spacing:0.08px">Current speed, w<sub>cs</sub> = 0.10 m/s</div>
<div class="p" style="top:304.0px">Wave height, H<sub>w</sub> = 0.20 m</div>
<div class="p" style="top:341.8px">Significant wave period, T<sub>w</sub> = 3.00 s</div>
<div class="p" style="top:380.0px;letter-spacing:0.02px">Water density, &rho;<sub>w</sub> = 1035.00 kg/m<sup>3</sup></div>
<div class="h2" style="top:420.0px">1.2. Air data</div>
<div class="p" style="top:455.8px;letter-spacing:0.1px">Wind speed, v<sub>a</sub> = 11.00 m/s</div>
<div class="p" style="top:492.8px">Air density, &rho;<sub>a</sub> = 1.25 kg/m<sup>3</sup></div>
<div class="h2" style="top:535.3px;letter-spacing:-0.13px">1.3. Silt curtain data</div>
<div class="p" style="top:569.2px;letter-spacing:0.1px">Skirt drop, s<sub>d</sub> = 3.80 m</div>
<div class="p" style="top:606.6px;letter-spacing:0.06px">Anchor spacing, L<sub>r</sub> = 15.00 m. Anchoring side: top only.</div>
<div class="h1" style="top:648.2px"><span style="font-size:18px">2. Analysis results</span></div>
<div class="p" style="top:689.8px">Second order analysis of structure is done, which implies that the equilibrium of the external loads</div>
<div class="p" style="top:715.1px;letter-spacing:0.01px">and internal forces is satisfied on the deformed configuration of the structure.</div>
</div></div>
</div></div>
</body></html>
